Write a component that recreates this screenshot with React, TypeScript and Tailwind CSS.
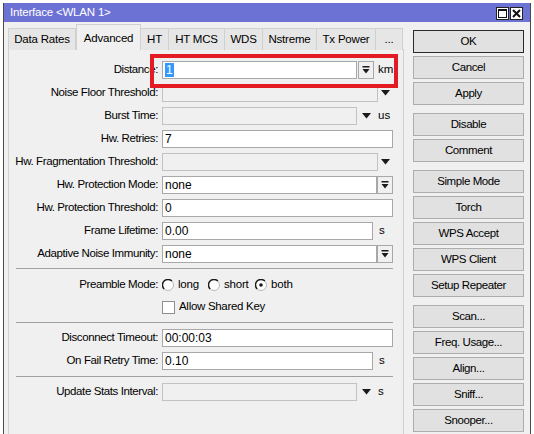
import type { ReactNode } from 'react';

const font = { fontFamily: '"Liberation Sans", Arial, sans-serif' };

function Input({ value, disabled, selected }: { value?: string; disabled?: boolean; selected?: boolean }) {
  return (
    <div
      className={`flex-1 h-[18px] border flex items-center pl-[2px] text-[12px] text-black overflow-hidden ${
        disabled ? 'bg-[#f0f0f0] border-[#c2c2c2]' : 'bg-white border-[#a8a8a8]'
      }`}
    >
      {selected ? <span className="bg-[#3399ff] text-white leading-[14px] px-[1px]">{value}</span> : value}
    </div>
  );
}

function DropBtn() {
  return (
    <div className="w-[16px] h-[18px] border border-[#a8a8a8] bg-[#f0f0f0] flex items-center justify-center">
      <svg width="8" height="8" viewBox="0 0 8 8">
        <rect x="0.5" y="0" width="7" height="1.5" fill="#1a1a1a" />
        <path d="M0.5 3 L7.5 3 L4 7.5 Z" fill="#1a1a1a" />
      </svg>
    </div>
  );
}

function Arrow({ w }: { w: string }) {
  return (
    <div className={`${w} h-[18px] flex items-center justify-center`}>
      <svg width="9" height="6" viewBox="0 0 9 6">
        <path d="M0 0 L9 0 L4.5 5.5 Z" fill="#1a1a1a" />
      </svg>
    </div>
  );
}

function Row({ label, children, h = 'h-[23px]' }: { label: string; children?: ReactNode; h?: string }) {
  return (
    <div className={`flex items-center ${h}`}>
      <div className="w-[149px] text-right text-[11.5px] tracking-[-0.4px] text-black whitespace-nowrap">{label}</div>
      <div className="flex-1 flex items-center ml-[4px] mr-[10px]">{children}</div>
    </div>
  );
}

function Sep({ className }: { className: string }) {
  return <div className={`ml-[7px] mr-[10px] h-0 border-t border-[#a0a0a0] ${className}`} />;
}

function Radio({ checked, label }: { checked?: boolean; label: string }) {
  return (
    <div className="flex items-center gap-[4px]">
      <svg width="12" height="12" viewBox="0 0 12 12">
        <circle cx="6" cy="6" r="5.5" fill="#ffffff" stroke="#b8b8b8" />
        <path d="M9.9 2.1 A5.5 5.5 0 0 0 2.1 9.9" fill="none" stroke="#1a1a1a" strokeWidth="1.4" />
        {checked && <circle cx="6" cy="6" r="1.8" fill="#1a1a1a" />}
      </svg>
      <span className="text-[11.5px] tracking-[-0.2px]">{label}</span>
    </div>
  );
}

const tabs = [
  { name: 'Data Rates', w: 'w-[68px]' },
  { name: 'Advanced', w: 'w-[65px]', active: true },
  { name: 'HT', w: 'w-[28px]' },
  { name: 'HT MCS', w: 'w-[56px]' },
  { name: 'WDS', w: 'w-[38px]' },
  { name: 'Nstreme', w: 'w-[54px]' },
  { name: 'Tx Power', w: 'w-[59px]' },
  { name: '...', w: 'w-[27px]' },
];

const buttonGroups = [
  ['OK', 'Cancel', 'Apply'],
  ['Disable', 'Comment'],
  ['Simple Mode', 'Torch', 'WPS Accept', 'WPS Client', 'Setup Repeater'],
  ['Scan...', 'Freq. Usage...', 'Align...', 'Sniff...', 'Snooper...'],
];

export default function App() {
  return (
    <div className="w-[534px] h-[434px] bg-white overflow-hidden relative" style={font}>
      <div className="ml-[3px] mt-[3px] w-[528px] h-[431px] border-x border-[#4a4a4a] bg-[#f0f0f0] flex flex-col">
        {/* title bar */}
        <div className="h-[19px] bg-[#6c71d4] flex items-center justify-between pl-[6px] pr-[7px]">
          <span className="text-white text-[11.5px] tracking-[-0.2px]">Interface &lt;WLAN 1&gt;</span>
          <div className="flex gap-[1px] mt-[2px]">
            <div className="w-[13px] h-[13px] bg-white border border-[#222] flex items-center justify-center">
              <div className="w-[9px] h-[9px] border border-[#111] border-t-2" />
            </div>
            <div className="w-[13px] h-[13px] bg-white border border-[#222] flex items-center justify-center">
              <svg width="9" height="9" viewBox="0 0 9 9">
                <path d="M1 1 L8 8 M8 1 L1 8" stroke="#111" strokeWidth="2" />
              </svg>
            </div>
          </div>
        </div>

        <div className="flex flex-1">
          {/* left: tabs + panel */}
          <div className="ml-[4px] w-[396px] flex flex-col pt-[2px]">
            <div className="flex items-end h-[26px] relative z-10 -mb-[1px]">
              {tabs.map((t) =>
                t.active ? (
                  <div
                    key={t.name}
                    className={`${t.w} h-[26px] bg-[#f0f0f0] border border-b-0 border-[#d0d0d0] flex justify-center pt-[5px] text-[11.5px] tracking-[-0.2px]`}
                  >
                    {t.name}
                  </div>
                ) : (
                  <div
                    key={t.name}
                    className={`${t.w} h-[22px] bg-[#e6e6e6] border border-b-0 border-l-0 first:border-l border-[#d0d0d0] flex items-center justify-center text-[11.5px] tracking-[-0.2px]`}
                  >
                    {t.name}
                  </div>
                ),
              )}
            </div>
            <div className="flex-1 border border-b-0 border-[#d0d0d0] bg-[#f0f0f0] pt-[8px]">
              <Row label="Distance:">
                <Input value="1" selected />
                <div className="ml-[1px]">
                  <DropBtn />
                </div>
                <span className="w-[19px] pl-[4px] text-[11.5px]">km</span>
              </Row>
              <Row label="Noise Floor Threshold:">
                <Input disabled />
                <Arrow w="w-[15px]" />
              </Row>
              <Row label="Burst Time:">
                <Input disabled />
                <Arrow w="w-[19px]" />
                <span className="w-[17px] pl-[2px] text-[11.5px]">us</span>
              </Row>
              <Row label="Hw. Retries:">
                <Input value="7" />
              </Row>
              <Row label="Hw. Fragmentation Threshold:">
                <Input disabled />
                <Arrow w="w-[15px]" />
              </Row>
              <Row label="Hw. Protection Mode:">
                <Input value="none" />
                <DropBtn />
              </Row>
              <Row label="Hw. Protection Threshold:">
                <Input value="0" />
              </Row>
              <Row label="Frame Lifetime:">
                <Input value="0.00" />
                <span className="w-[20px] pl-[6px] text-[11.5px]">s</span>
              </Row>
              <Row label="Adaptive Noise Immunity:">
                <Input value="none" />
                <DropBtn />
              </Row>

              <Sep className="mt-[3px] mb-[4px]" />

              <Row label="Preamble Mode:">
                <div className="flex items-center">
                  <div className="w-[46px]">
                    <Radio label="long" />
                  </div>
                  <div className="w-[47px]">
                    <Radio label="short" />
                  </div>
                  <Radio label="both" checked />
                </div>
              </Row>
              <Row label="" h="h-[22px]">
                <div className="flex items-center gap-[4px]">
                  <div className="w-[13px] h-[13px] bg-white border border-[#8f8f8f]" />
                  <span className="text-[11.5px] tracking-[-0.3px]">Allow Shared Key</span>
                </div>
              </Row>

              <Sep className="mt-[4px] mb-[3px]" />

              <Row label="Disconnect Timeout:">
                <Input value="00:00:03" />
              </Row>
              <Row label="On Fail Retry Time:">
                <Input value="0.10" />
                <span className="w-[20px] pl-[6px] text-[11.5px]">s</span>
              </Row>

              <Sep className="mt-[4px] mb-[3px]" />

              <Row label="Update Stats Interval:">
                <Input disabled />
                <Arrow w="w-[19px]" />
                <span className="w-[17px] pl-[2px] text-[11.5px]">s</span>
              </Row>
            </div>
          </div>

          {/* right: buttons */}
          <div className="ml-[9px] w-[111px] pt-[8px] flex flex-col gap-[8px]">
            {buttonGroups.map((g, gi) => (
              <div key={gi} className="flex flex-col gap-[3px]">
                {g.map((b) => (
                  <div
                    key={b}
                    className={`h-[23px] border bg-[#e1e1e1] flex items-center justify-center text-[11.5px] tracking-[-0.4px] text-black ${
                      b === 'OK' ? 'border-[#2a2a2a]' : 'border-[#adadad]'
                    }`}
                  >
                    {b}
                  </div>
                ))}
              </div>
            ))}
          </div>
        </div>
      </div>

      {/* red annotation box */}
      <div className="absolute left-[150px] top-[54px] w-[248px] h-[34px] border-[4px] border-[#e31b23]" />
    </div>
  );
}
